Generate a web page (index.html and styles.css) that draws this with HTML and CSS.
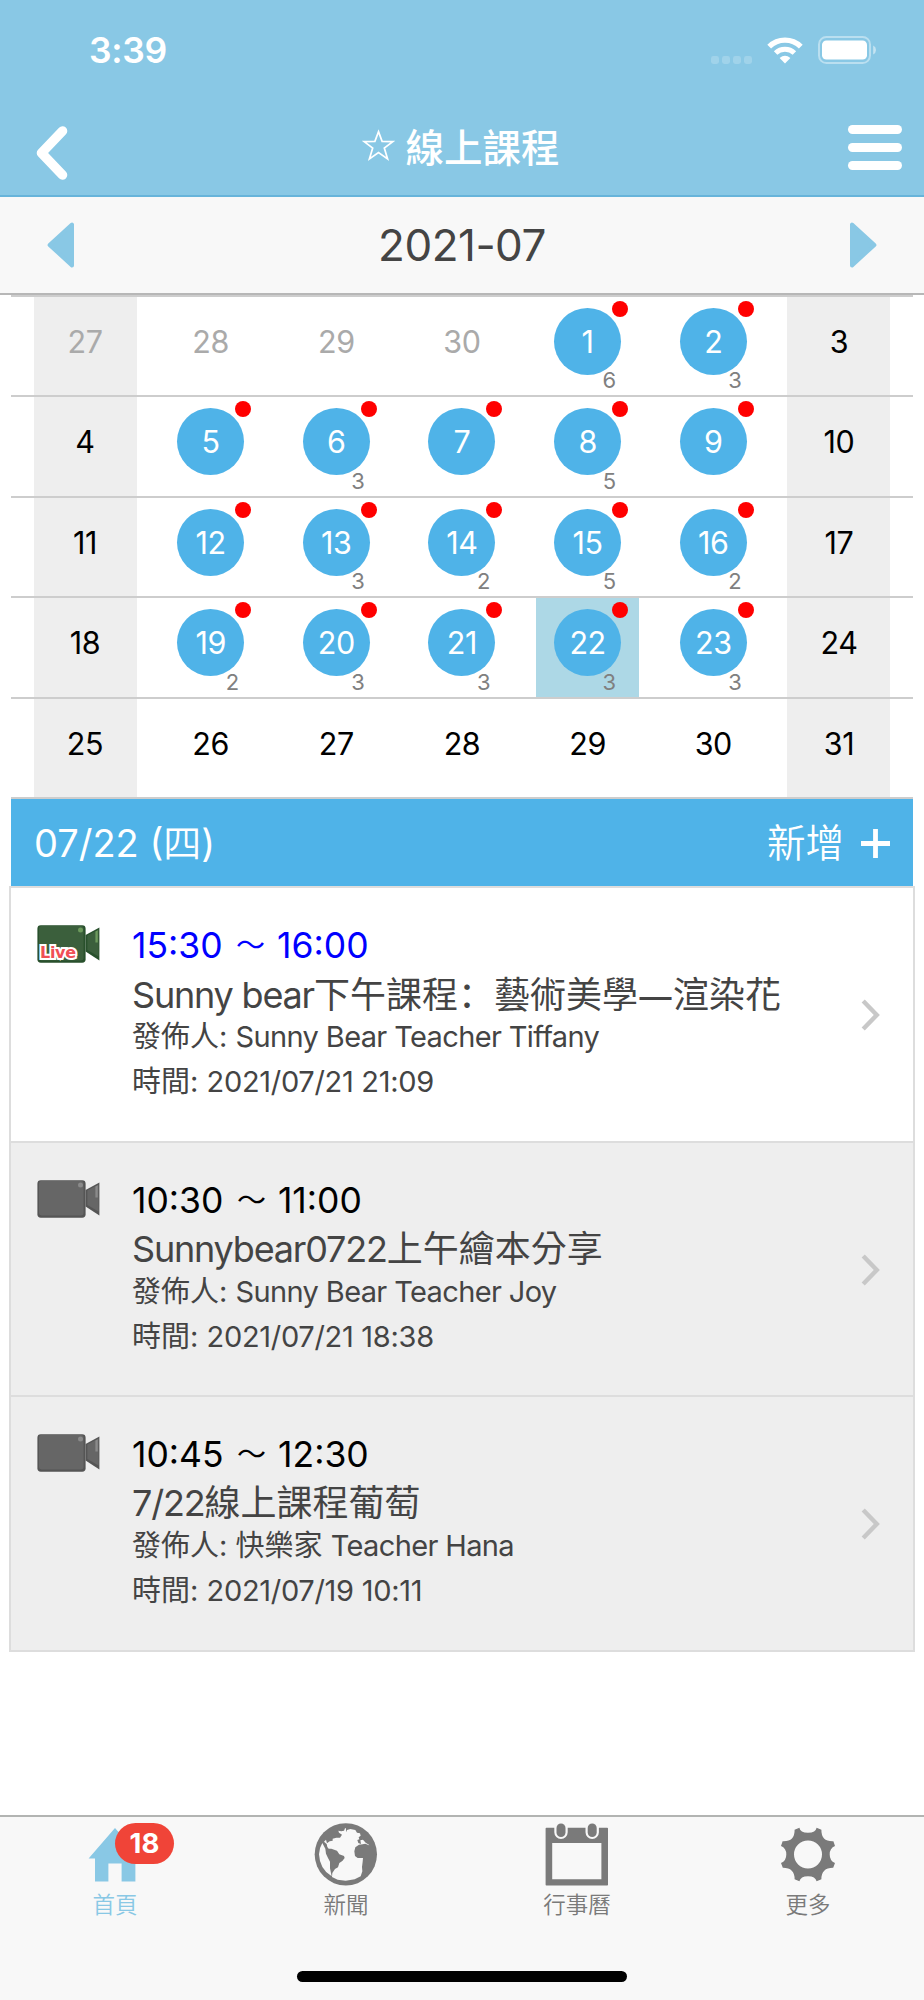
FILE: index.html
```html
<!DOCTYPE html>
<html lang="zh-Hant">
<head>
<meta charset="utf-8">
<title>線上課程</title>
<link rel="stylesheet" href="styles.css">
</head>
<body>
<svg class="defs" width="0" height="0" aria-hidden="true">
  <symbol id="camera" viewBox="0 0 63 38">
    <rect x="0.4" y="0.3" width="48.2" height="37.4" rx="3.4" fill="var(--cam-edge)"/>
    <rect x="2" y="1" width="44.6" height="34.4" rx="2.4" fill="var(--cam-body)"/>
    <path d="M48.6 10 62.4 2.6V35.4L48.6 26.6Z" fill="var(--cam-edge)"/>
    <path d="M50.4 10.4 61.6 4.4V31.6L50.4 25Z" fill="var(--cam-body)"/>
    <circle cx="43.5" cy="5" r="2.5" fill="var(--cam-light)"/>
    <path d="M58.4 6.6 60.8 5.2V17.4H58.4Z" fill="var(--cam-light)"/>
  </symbol>
  <symbol id="chevron" viewBox="0 0 20 32">
    <path d="M2.2 2 15.8 16 2.2 30" fill="none" stroke="#c8c8c8" stroke-width="4.4"/>
  </symbol>
</svg>

<header class="header">
  <div class="status">
    <span class="clock">3:39</span>
    <div class="status-icons">
      <svg class="signal" width="42" height="8" viewBox="0 0 42 8" fill="#fff" fill-opacity=".2"><rect width="8" height="8" rx="2.4"/><rect x="11" width="8" height="8" rx="2.4"/><rect x="22" width="8" height="8" rx="2.4"/><rect x="33" width="8" height="8" rx="2.4"/></svg>
      <svg class="wifi" width="36" height="27" viewBox="0 0 36 27" fill="none" stroke="#fff"><path d="M2.2 9.6A22.6 22.6 0 0 1 33.8 9.6" stroke-width="5.4"/><path d="M8.6 16A13.6 13.6 0 0 1 27.4 16" stroke-width="5"/><path d="M18 26.4 12.6 21Q18 16.4 23.4 21Z" fill="#fff" stroke="none"/></svg>
      <svg class="battery" width="59" height="28" viewBox="0 0 59 28"><rect x="1" y="1" width="51" height="26" rx="7.4" fill="none" stroke="#fff" stroke-opacity=".42" stroke-width="2"/><rect x="4" y="4.4" width="45" height="19.2" rx="4.4" fill="#fff"/><path d="M55.2 9.6Q58 11 58 14T55.2 18.6Z" fill="#fff" fill-opacity=".5"/></svg>
    </div>
  </div>
  <div class="navbar">
    <svg class="back" width="34" height="54" viewBox="0 0 34 54"><path d="M28.500 5 7.500 27 28.500 49" fill="none" stroke="#fff" stroke-width="9.600" stroke-linecap="round" stroke-linejoin="round"/></svg>
    <h1 class="title"><svg class="star" width="33" height="33" viewBox="0 0 33 33"><path d="M16.500 2.600 20.100 12.400 30.800 12.600 22.300 19 25.600 30 16.500 23.600 7.400 30 10.700 19 2.200 12.600 12.900 12.400Z" fill="none" stroke="#fff" stroke-width="1.700"/></svg>線上課程</h1>
    <div class="menu"><i></i><i></i><i></i></div>
  </div>
</header>

<section class="monthbar">
  <svg width="28" height="46" viewBox="0 0 28 46"><path d="M25 2.6V43.4L2.6 23Z" fill="#89c8e5" stroke="#89c8e5" stroke-width="4" stroke-linejoin="round"/></svg>
  <span class="month">2021-07</span>
  <svg width="28" height="46" viewBox="0 0 28 46"><path d="M3 2.6V43.4L25.4 23Z" fill="#89c8e5" stroke="#89c8e5" stroke-width="4" stroke-linejoin="round"/></svg>
</section>

<main class="content">
  <section class="calendar">
    <div class="week">
      <div class="day weekend other"><b>27</b></div>
      <div class="day other"><b>28</b></div>
      <div class="day other"><b>29</b></div>
      <div class="day other"><b>30</b></div>
      <div class="day event"><b>1</b><i></i><small>6</small></div>
      <div class="day event"><b>2</b><i></i><small>3</small></div>
      <div class="day weekend"><b>3</b></div>
    </div>
    <div class="week">
      <div class="day weekend"><b>4</b></div>
      <div class="day event"><b>5</b><i></i></div>
      <div class="day event"><b>6</b><i></i><small>3</small></div>
      <div class="day event"><b>7</b><i></i></div>
      <div class="day event"><b>8</b><i></i><small>5</small></div>
      <div class="day event"><b>9</b><i></i></div>
      <div class="day weekend"><b>10</b></div>
    </div>
    <div class="week">
      <div class="day weekend"><b>11</b></div>
      <div class="day event"><b>12</b><i></i></div>
      <div class="day event"><b>13</b><i></i><small>3</small></div>
      <div class="day event"><b>14</b><i></i><small>2</small></div>
      <div class="day event"><b>15</b><i></i><small>5</small></div>
      <div class="day event"><b>16</b><i></i><small>2</small></div>
      <div class="day weekend"><b>17</b></div>
    </div>
    <div class="week">
      <div class="day weekend"><b>18</b></div>
      <div class="day event"><b>19</b><i></i><small>2</small></div>
      <div class="day event"><b>20</b><i></i><small>3</small></div>
      <div class="day event"><b>21</b><i></i><small>3</small></div>
      <div class="day event selected"><b>22</b><i></i><small>3</small></div>
      <div class="day event"><b>23</b><i></i><small>3</small></div>
      <div class="day weekend"><b>24</b></div>
    </div>
    <div class="week">
      <div class="day weekend"><b>25</b></div>
      <div class="day"><b>26</b></div>
      <div class="day"><b>27</b></div>
      <div class="day"><b>28</b></div>
      <div class="day"><b>29</b></div>
      <div class="day"><b>30</b></div>
      <div class="day weekend"><b>31</b></div>
    </div>
  </section>

  <div class="datebar">
    <span class="date">07/22 (<span class="weekday">四</span>)</span>
    <span class="add">新增<svg width="29" height="29" viewBox="0 0 29 29"><path d="M14.5 0V29M0 14.5H29" stroke="#fff" stroke-width="4.8"/></svg></span>
  </div>

  <ul class="lessons">
    <li class="lesson live">
      <div class="cam"><svg width="63" height="38"><use href="#camera"/></svg><span class="live-tag">Live</span></div>
      <div class="info">
        <p class="time">15:30 <span class="tilde">～</span> 16:00</p>
        <p class="name"><span class="latin">Sunny bear</span>下午課程<span class="colon" lang="zh-Hans">：</span>藝術美學<span class="dash">—</span>渲染花</p>
        <p class="meta">發佈人: <span class="author">Sunny Bear Teacher Tiffany</span></p>
        <p class="meta">時間: <span class="stamp">2021/07/21 21:09</span></p>
      </div>
      <svg class="chevron" width="20" height="32"><use href="#chevron"/></svg>
    </li>
    <li class="lesson">
      <div class="cam"><svg width="63" height="38"><use href="#camera"/></svg></div>
      <div class="info">
        <p class="time">10:30 <span class="tilde">～</span> 11:00</p>
        <p class="name"><span class="latin">Sunnybear0722</span>上午繪本分享</p>
        <p class="meta">發佈人: <span class="author">Sunny Bear Teacher Joy</span></p>
        <p class="meta">時間: <span class="stamp">2021/07/21 18:38</span></p>
      </div>
      <svg class="chevron" width="20" height="32"><use href="#chevron"/></svg>
    </li>
    <li class="lesson">
      <div class="cam"><svg width="63" height="38"><use href="#camera"/></svg></div>
      <div class="info">
        <p class="time">10:45 <span class="tilde">～</span> 12:30</p>
        <p class="name"><span class="latin">7/22</span>線上課程葡萄</p>
        <p class="meta">發佈人: 快樂家 <span class="author">Teacher Hana</span></p>
        <p class="meta">時間: <span class="stamp">2021/07/19 10:11</span></p>
      </div>
      <svg class="chevron" width="20" height="32"><use href="#chevron"/></svg>
    </li>
  </ul>
</main>

<footer class="tabbar">
  <nav class="tabs">
    <a class="tab active">
      <svg width="64" height="64" viewBox="0 0 64 64" fill="#89c8e5"><path d="M32 5 58.600 35.600H52.400V58.400H38.600V40.400H25.400V58.400H12V35.600H5.600Z"/></svg>
      <span>首頁</span>
      <em class="badge">18</em>
    </a>
    <a class="tab">
      <svg width="64" height="64" viewBox="13 16 192 192"><circle cx="108.500" cy="110" r="93.500" fill="#7a7a7a"/><path fill="#f8f8f8" d="M43 72 49 66 52 77 60 71 69 69V63L80 60H91L97 51 88 45 86 39 95 41 103 39 106 32 109 32V44L112 37 122 34 137 37 142 45 151 47 153 54 147 59 149 65 143 67 146 76 154 79 152 68 160 66 168 75 179 82 178 83 167 78 159 80 148 81 137 89 134 101 136 115 144 121 160 121 159 132 157 148 158 161 153 176 135 185 108 189 84 186 67 178 68 166 76 154 85 149 89 136 98 130 105 121 103 115 89 110 82 99 65 93 57 93 53 88 51 79ZM38 76 47 93 49 108 55 121 61 132V152L66 176Q30 155 28 110 28 92 38 76Z"/></svg>
      <span>新聞</span>
    </a>
    <a class="tab">
      <svg width="64" height="64" viewBox="0 0 64 64" fill="#7a7a7a"><path fill-rule="evenodd" d="M1.400 4.700H9.300V9.300A6.700 6.700 0 0 0 22.700 9.300V4.700H40.500V9.300A6.700 6.700 0 0 0 53.900 9.300V4.700H62.200Q63 4.700 63 5.500V61.800Q63 62.600 62.200 62.600H1.400Q.6 62.600 .6 61.800V5.500Q.6 4.700 1.400 4.700ZM7.200 20V56.300H56.400V20Z"/><rect x="11.500" y=".5" width="9" height="13.600" rx="4.500"/><rect x="42.700" y=".5" width="9" height="13.600" rx="4.500"/></svg>
      <span>行事曆</span>
    </a>
    <a class="tab">
      <svg width="64" height="64" viewBox="-32 -31.500 64 64"><path fill="#7a7a7a" fill-rule="evenodd" d="M-8.600 -26.800Q-7.800 -22 0 -21.700Q7.800 -22 8.600 -26.800L13.400 -24.800Q13.100 -12.800 25.400 -13.300L27 -8.500Q21.700 -6.500 21.700 0Q21.700 6.500 27 8.500L25.200 13.300Q13.300 13.200 13.400 24.800L8.600 26.800Q7.500 21.800 0 21.700Q-7.500 21.800 -8.600 26.800L-13.400 24.800Q-13.300 13.200 -25.200 13.300L-27 8.500Q-21.700 6.500 -21.700 0Q-21.700 -6.500 -27 -8.500L-25.400 -13.300Q-13.100 -12.800 -13.400 -24.800ZM0 -14A14 14 0 1 0 0 14A14 14 0 1 0 0 -14Z"/></svg>
      <span>更多</span>
    </a>
  </nav>
  <div class="home-indicator"></div>
</footer>
</body>
</html>
```
FILE: styles.css
```css
* { box-sizing: border-box; }

body {
  margin: 0;
  width: 924px;
  height: 2000px;
  display: flex;
  flex-direction: column;
  background: #fff;
  color: #444;
  font-family: Inter, "Noto Sans CJK TC", sans-serif;
}

h1, p, ul { margin: 0; padding: 0; }
.defs { position: absolute; }
svg { display: block; flex: none; }

.header {
  height: 197px;
  background: #89c8e5;
  border-bottom: 2px solid #67b4da;
  color: #fff;
}
.status {
  height: 100px;
  padding: 0 47px 0 89px;
  display: flex;
  justify-content: space-between;
  align-items: center;
}
.clock { font-size: 35.500px; font-weight: 600; line-height: 40px; letter-spacing: -.3px; padding-top: 2px; }
.status-icons { display: flex; align-items: center; }
.signal { margin: 19px 14px 0 0; }
.wifi { margin-right: 15px; }
.navbar {
  height: 95px;
  padding: 0 22px 0 34px;
  display: flex;
  justify-content: space-between;
  align-items: center;
}
.back { margin-top: 11px; }
.title {
  display: flex;
  align-items: center;
  font-size: 38.500px;
  font-weight: 500;
  line-height: 50px;
  padding-left: 6px;
}
.star { margin: -5px 10px 0 0; }
.menu { width: 54px; display: flex; flex-direction: column; gap: 9px; }
.menu i { height: 9px; border-radius: 5px; background: #fff; }

.monthbar {
  height: 98px;
  padding: 0 47px;
  display: flex;
  justify-content: space-between;
  align-items: center;
  background: #f8f8f8;
  border-bottom: 2px solid #b7b7b7;
}
.month { font-size: 44px; line-height: 54px; letter-spacing: -.5px; }

.content { flex: 1; padding: 0 9px; }
.calendar { margin: 0 2px; border-top: 2px solid #cdcdcd; }
.week {
  height: 100.400px;
  padding: 0 22.500px;
  display: flex;
  justify-content: space-between;
  border-bottom: 2px solid #cdcdcd;
}
.day {
  position: relative;
  width: 103px;
  padding-top: 11px;
  color: #000;
  font-size: 30.500px;
}
.day b {
  display: block;
  width: 67px;
  height: 67px;
  margin: 0 auto;
  border-radius: 50%;
  font-weight: 400;
  line-height: 68px;
  letter-spacing: -.4px;
  text-align: center;
}
.weekend { background: #eee; }
.other { color: #aaa; }
.event b { background: #4fb3e8; color: #fff; }
.selected { background: #add8e6; }
.day i {
  position: absolute;
  top: 4px;
  right: 11px;
  width: 16px;
  height: 16px;
  border-radius: 50%;
  background: #f00;
}
.day small {
  position: absolute;
  right: 23px;
  bottom: 2px;
  font-size: 22px;
  line-height: 26px;
  color: #808080;
}

.datebar {
  height: 87px;
  margin: 0 2px;
  padding: 2px 23px 0 23px;
  display: flex;
  justify-content: space-between;
  align-items: center;
  background: #4fb3e8;
  color: #fff;
  font-size: 38px;
  line-height: 50px;
}
.weekday { font-weight: 350; }
.add { display: flex; align-items: center; gap: 17px; font-size: 38.500px; font-weight: 350; }

.lessons { list-style: none; border: 2px solid #ddd; }
.lesson {
  --cam-body: #666;
  --cam-edge: #555;
  --cam-light: #8a8a8a;
  height: 254.300px;
  display: flex;
  padding: 37px 32px 0 26px;
  background: #eee;
}
.lesson + .lesson { border-top: 2px solid #ddd; }
.lesson.live {
  --cam-body: #3b5f3c;
  --cam-edge: #28502c;
  --cam-light: #6c9a5c;
  height: 253px;
  background: #fff;
}
.cam { position: relative; width: 95px; }
.live-tag {
  position: absolute;
  left: 3px;
  top: 18px;
  font-family: "DejaVu Sans", sans-serif;
  font-size: 16px;
  font-weight: 700;
  line-height: 20px;
  color: #f04f55;
  letter-spacing: -.3px;
  -webkit-text-stroke: 4px #fff;
  paint-order: stroke fill;
}
.info { flex: 1; margin-top: -1px; white-space: nowrap; }
.time { height: 44px; font-size: 35.500px; line-height: 44px; color: #000; }
.tilde { margin: 0 2px 0 3.500px; font-size: 29px; line-height: 1; vertical-align: 2px; }
.live .time { color: #00f; }
.name { height: 40px; margin-top: 6px; font-size: 36px; line-height: 40px; }
.latin { letter-spacing: -1.200px; }
.colon { font-family: "Noto Sans CJK SC", sans-serif; line-height: 1; }
.dash { font-size: 32px; font-weight: 500; line-height: 1; padding: 0 1.500px; }
.meta { font-size: 29px; line-height: 45px; }
.author { letter-spacing: -.630px; }
.stamp { letter-spacing: -.300px; }
.chevron { margin-top: 74px; }

.tabbar {
  height: 185px;
  border-top: 2px solid #b2b4b2;
  background: #f8f8f8;
}
.tabs { display: flex; height: 154px; }
.tab {
  position: relative;
  flex: 1;
  padding: 6px 1px 0 0;
  display: flex;
  flex-direction: column;
  align-items: center;
  color: #7a7a7a;
  font-size: 22.500px;
  font-weight: 350;
  line-height: 32px;
}
.tab span { margin-top: 2px; }
.active { color: #89c8e5; }
.badge {
  position: absolute;
  left: 115px;
  top: 6px;
  width: 59px;
  height: 41px;
  border-radius: 21px;
  background: #f04438;
  color: #fff;
  font-size: 27.500px;
  font-style: normal;
  font-weight: 700;
  line-height: 41px;
  text-align: center;
}
.home-indicator {
  width: 330px;
  height: 11px;
  margin: 0 auto;
  border-radius: 6px;
  background: #000;
}
```
